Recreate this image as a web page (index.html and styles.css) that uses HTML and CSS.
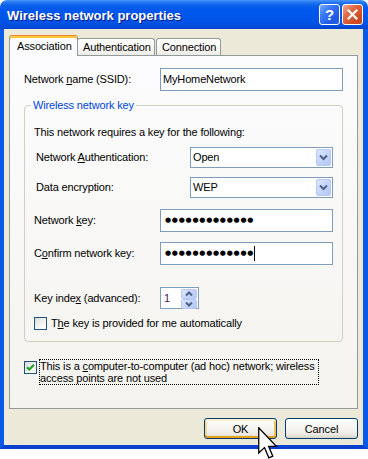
FILE: index.html
```html
<!DOCTYPE html>
<html>
<head>
<meta charset="utf-8">
<title>Wireless network properties</title>
<link rel="stylesheet" href="styles.css">
</head>
<body>
<div class="window">
  <div class="titlebar">
    <span class="title">Wireless network properties</span>
    <div class="caption-btns">
      <span class="cbtn help">?</span>
      <span class="cbtn close"><svg width="13" height="13" viewBox="0 0 13 13"><path d="M2.5 2.5L10.5 10.5M10.5 2.5L2.5 10.5" stroke="#fff" stroke-width="2.2" stroke-linecap="square"/></svg></span>
    </div>
  </div>
  <div class="frame">
    <div class="tabs">
      <div class="tab active">Association</div>
      <div class="tab auth">Authentication</div>
      <div class="tab conn">Connection</div>
    </div>
    <div class="panel">
      <div class="row ssid">
        <span class="lbl w-ssid">Network <u>n</u>ame (SSID):</span>
        <div class="edit grow">MyHomeNetwork</div>
      </div>
      <fieldset class="group">
        <legend>Wireless network key</legend>
        <div class="req">This network requires a key for the following:</div>
        <div class="row combo-row first">
          <span class="lbl w-combo">Network <u>A</u>uthentication:</span>
          <div class="combo"><span class="val">Open</span><span class="drop"><svg width="13" height="15" viewBox="0 0 13 15"><path d="M3 5.5L6.5 9L10 5.5" fill="none" stroke="#4D6185" stroke-width="2"/></svg></span></div>
        </div>
        <div class="row combo-row second">
          <span class="lbl w-combo">Data encryption:</span>
          <div class="combo"><span class="val">WEP</span><span class="drop"><svg width="13" height="15" viewBox="0 0 13 15"><path d="M3 5.5L6.5 9L10 5.5" fill="none" stroke="#4D6185" stroke-width="2"/></svg></span></div>
        </div>
        <div class="row key-row netkey">
          <span class="lbl w-key">Network <u>k</u>ey:</span>
          <div class="edit key"><span class="dots">●●●●●●●●●●●●●</span></div>
        </div>
        <div class="row key-row confirm">
          <span class="lbl w-key">C<u>o</u>nfirm network key:</span>
          <div class="edit key"><span class="dots">●●●●●●●●●●●●●</span><span class="caret"></span></div>
        </div>
        <div class="row key-row index">
          <span class="lbl w-key">Key inde<u>x</u> (advanced):</span>
          <div class="spin">
            <span class="val">1</span>
            <div class="spin-btns">
              <span class="sbtn"><svg width="14" height="8" viewBox="0 0 14 8"><path d="M4 5.5L7 2.5L10 5.5" fill="none" stroke="#4D6185" stroke-width="2"/></svg></span>
              <span class="sbtn"><svg width="14" height="8" viewBox="0 0 14 8"><path d="M4 2.5L7 5.5L10 2.5" fill="none" stroke="#4D6185" stroke-width="2"/></svg></span>
            </div>
          </div>
        </div>
        <div class="check-row auto">
          <span class="checkbox"></span>
          <span class="check-lbl">T<u>h</u>e key is provided for me automatically</span>
        </div>
      </fieldset>
      <div class="adhoc">
        <span class="checkbox checked"><svg width="11" height="11" viewBox="0 0 11 11"><path d="M2 5.2L4.3 7.5L9 2.8" fill="none" stroke="#21A121" stroke-width="2.2"/></svg></span>
        <span class="focus-lbl">This is a <u>c</u>omputer-to-computer (ad hoc) network; wireless<br>access points are not used</span>
      </div>
    </div>
    <div class="buttons">
      <button class="btn ok">OK</button>
      <button class="btn">Cancel</button>
    </div>
  </div>
</div>
<svg class="cursor" width="20" height="32" viewBox="0 0 20 32"><path d="M0.75 0.75L0.75 26L6.5 20.5L10.8 30.8L14.8 29.2L10.6 19.3L18.3 19.3Z" fill="#fff" stroke="#000" stroke-width="1.3" stroke-linejoin="miter"/></svg>
</body>
</html>
```

FILE: styles.css
```css
* { box-sizing: border-box; }

html, body {
  margin: 0;
  padding: 0;
  background: #ffffff;
}

body {
  position: relative;
  width: 368px;
  height: 459px;
  overflow: hidden;
  font-family: "Liberation Sans", Arial, sans-serif;
  font-size: 11px;
  line-height: 13px;
  letter-spacing: -0.15px;
  color: #000;
}

.window {
  width: 368px;
  height: 449px;
  display: flex;
  flex-direction: column;
}

/* Title bar */
.titlebar {
  height: 29px;
  flex: none;
  display: flex;
  align-items: center;
  justify-content: space-between;
  padding: 0 5px 0 7px;
  border-radius: 7px 7px 0 0;
  background: linear-gradient(to bottom,
    #4A96FA 0px, #2A7BF3 2px, #0E62EB 5px, #0058EE 9px,
    #0056EA 17px, #0052E3 23px, #004AD8 27px, #0041C8 29px);
}

.title {
  color: #fff;
  font-weight: bold;
  font-size: 13px;
  letter-spacing: 0;
  text-shadow: 1px 1px 0 #0A1883;
  margin-top: 2px;
}

.caption-btns {
  display: flex;
  gap: 2px;
}

.cbtn {
  width: 21px;
  height: 21px;
  border: 1px solid #fff;
  border-radius: 3px;
  display: flex;
  align-items: center;
  justify-content: center;
}

.help {
  background: linear-gradient(135deg, #74AAFF 0%, #3A78F4 35%, #1E58E4 75%, #2A62E6 100%);
  color: #fff;
  font-weight: bold;
  font-size: 15px;
  letter-spacing: 0;
}

.close {
  background: linear-gradient(135deg, #F2AE93 0%, #E16A43 35%, #D04A22 75%, #C8461F 100%);
}

/* Frame */
.frame {
  flex: 1;
  display: flex;
  flex-direction: column;
  background: #ECE9D8;
  border-left: 4px solid #0A5AEA;
  border-right: 5px solid #0A5AEA;
  border-bottom: 4px solid #0642CF;
  padding: 6px 5px 0 5px;
}

/* Tabs */
.tabs {
  display: flex;
  align-items: flex-end;
  height: 20px;
  flex: none;
}

.tab {
  height: 17px;
  border: 1px solid #919B9C;
  border-bottom: none;
  border-radius: 3px 3px 0 0;
  background: linear-gradient(#FFFFFF, #F7F6F2 60%, #ECEBE6);
  display: flex;
  align-items: center;
  padding-top: 1px;
}

.tab.active {
  width: 69px;
  height: 21px;
  margin-bottom: -1px;
  position: relative;
  z-index: 1;
  padding-left: 7px;
  padding-top: 0;
  background: #FCFCFE;
  border-top: 1px solid #E68B2C;
  box-shadow: inset 0 2px 0 #FFC73C;
}

.tab.auth {
  width: 78px;
  margin-left: -1px;
  padding-left: 5px;
}

.tab.conn {
  width: 65px;
  margin-left: 1px;
  padding-left: 5px;
}

/* Panel */
.panel {
  height: 354px;
  flex: none;
  border: 1px solid #919B9C;
  background: linear-gradient(#FCFCFE, #F4F3EE);
  padding: 12px 14px 0 14px;
}

.row {
  display: flex;
  align-items: center;
}

.lbl {
  flex: none;
}

.w-ssid { width: 136px; }
.w-combo { width: 165px; padding-left: 11px; }
.w-key { width: 135px; padding-left: 9px; }

.edit {
  height: 23px;
  border: 1px solid #7F9DB9;
  background: #fff;
  padding-left: 2px;
  display: flex;
  align-items: center;
}

.grow { flex: 1; }

.edit.key {
  width: 173px;
  padding-left: 4px;
}

.dots {
  font-family: "DejaVu Sans", sans-serif;
  font-size: 7px;
  letter-spacing: 0.75px;
  line-height: 13px;
}

.caret {
  display: inline-block;
  width: 1px;
  height: 15px;
  background: #000;
  margin-left: 0;
}

/* Group */
.group {
  margin: 8px 0 0 0;
  padding: 0 0 11px 0;
  border: 1px solid #D0D0BF;
  border-radius: 4px;
  min-width: 0;
}

.group legend {
  color: #0046D5;
  padding: 0 2px;
  margin-left: 6px;
  line-height: 13px;
}

.req {
  margin-top: 14px;
  padding-left: 9px;
}

.combo-row.first { margin-top: 8px; }
.combo-row.second { margin-top: 9px; }
.key-row.netkey { margin-top: 11px; }
.key-row.confirm { margin-top: 10px; }
.key-row.index { margin-top: 22px; }

.combo {
  width: 143px;
  height: 21px;
  border: 1px solid #7F9DB9;
  background: #fff;
  padding: 1px;
  display: flex;
  align-items: center;
}

.combo .val {
  flex: 1;
  padding-left: 1px;
}

.drop {
  width: 15px;
  height: 17px;
  border: 1px solid #B7C8F2;
  border-radius: 2px;
  background: linear-gradient(135deg, #DDE7FD 0%, #C5D5FA 50%, #B4C8F6 100%);
  display: flex;
  align-items: center;
  justify-content: center;
}

.spin {
  width: 39px;
  height: 22px;
  border: 1px solid #7F9DB9;
  background: #fff;
  padding: 1px;
  display: flex;
}

.spin .val {
  flex: 1;
  padding-left: 2px;
  line-height: 19px;
  color: #4A1563;
}

.spin-btns {
  width: 16px;
  display: flex;
  flex-direction: column;
}

.sbtn {
  height: 10px;
  border: 1px solid #B7C8F2;
  border-radius: 2px;
  background: linear-gradient(135deg, #DDE7FD 0%, #C5D5FA 50%, #B4C8F6 100%);
  display: flex;
  align-items: center;
  justify-content: center;
}

/* Checkboxes */
.check-row {
  display: flex;
  align-items: center;
  margin-top: 8px;
  padding-left: 9px;
}

.checkbox {
  flex: none;
  width: 13px;
  height: 13px;
  border: 1px solid #1C5180;
  background: linear-gradient(135deg, #DCDCD7 0%, #F4F4F1 60%, #FFFFFF 100%);
  display: flex;
  align-items: center;
  justify-content: center;
}

.check-lbl {
  margin-left: 4px;
}

.adhoc {
  display: flex;
  align-items: flex-start;
  margin-top: 17px;
}

.adhoc .checkbox {
  margin-top: 2px;
}

.focus-lbl {
  margin-left: 2px;
  border: 1px dotted #000;
  line-height: 12px;
  padding: 0 3px 0 0;
  white-space: nowrap;
}

/* Buttons */
.buttons {
  display: flex;
  justify-content: flex-end;
  gap: 8px;
  margin-top: 9px;
}

.btn {
  width: 73px;
  height: 21px;
  border: 1px solid #003C74;
  border-radius: 3px;
  background: linear-gradient(#FFFFFF 0%, #F5F4EF 50%, #ECEAE2 80%, #D8D2C6 100%);
  font-family: "Liberation Sans", Arial, sans-serif;
  font-size: 11px;
  letter-spacing: -0.15px;
  color: #000;
  padding: 0;
}

.btn.ok {
  box-shadow: inset 0 2px 0 #FFF0CF, inset 0 -2px 0 #E5A01A, inset 2px 0 0 #FBD68E, inset -2px 0 0 #F4C15A;
}

/* Mouse pointer overlay */
.cursor {
  position: absolute;
  left: 258px;
  top: 427px;
}
```
